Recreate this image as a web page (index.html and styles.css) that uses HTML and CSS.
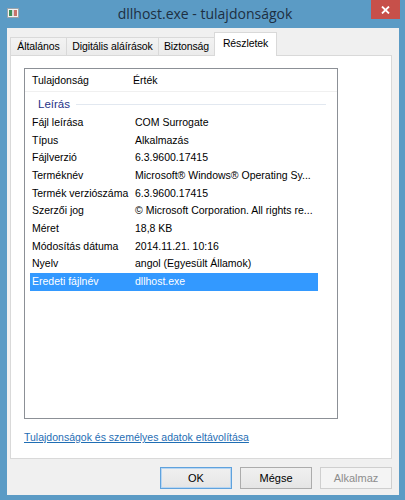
FILE: index.html
```html
<!DOCTYPE html>
<html lang="hu">
<head>
<meta charset="utf-8">
<title>dllhost.exe - tulajdonságok</title>
<link rel="stylesheet" href="styles.css">
</head>
<body>
<div class="window">
  <div class="titlebar">
    <svg class="app-icon" width="12" height="10" viewBox="0 0 12 10">
      <rect x="0.5" y="0.5" width="11" height="9" fill="#f4f4f4" stroke="#9aa3aa"/>
      <rect x="2" y="2" width="3" height="6" fill="#3f8f5a"/>
      <rect x="5" y="2" width="2" height="6" fill="#d9d9d9"/>
      <rect x="7" y="2" width="3" height="6" fill="#c9736c"/>
    </svg>
    <div class="title">dllhost.exe - tulajdonságok</div>
    <div class="close">
      <svg width="9" height="8" viewBox="0 0 9 8"><path d="M1 0.5 L8 7.5 M8 0.5 L1 7.5" stroke="#fff" stroke-width="1.8"/></svg>
    </div>
  </div>
  <div class="client">
    <div class="tabs">
      <div class="tab t1">Általános</div>
      <div class="tab t2">Digitális aláírások</div>
      <div class="tab t3">Biztonság</div>
      <div class="tab t4 active">Részletek</div>
    </div>
    <div class="panel">
      <div class="listbox">
        <div class="header">
          <div class="col-a">Tulajdonság</div>
          <div class="col-b">Érték</div>
        </div>
        <div class="group"><span class="group-label">Leírás</span><span class="group-line"></span></div>
        <div class="row"><div class="col-a">Fájl leírása</div><div class="col-b">COM Surrogate</div></div>
        <div class="row"><div class="col-a">Típus</div><div class="col-b">Alkalmazás</div></div>
        <div class="row"><div class="col-a">Fájlverzió</div><div class="col-b">6.3.9600.17415</div></div>
        <div class="row"><div class="col-a">Terméknév</div><div class="col-b">Microsoft® Windows® Operating Sy...</div></div>
        <div class="row"><div class="col-a">Termék verziószáma</div><div class="col-b">6.3.9600.17415</div></div>
        <div class="row"><div class="col-a">Szerzői jog</div><div class="col-b">© Microsoft Corporation. All rights re...</div></div>
        <div class="row"><div class="col-a">Méret</div><div class="col-b">18,8 KB</div></div>
        <div class="row"><div class="col-a">Módosítás dátuma</div><div class="col-b">2014.11.21. 10:16</div></div>
        <div class="row"><div class="col-a">Nyelv</div><div class="col-b">angol (Egyesült Államok)</div></div>
        <div class="row selected"><div class="col-a">Eredeti fájlnév</div><div class="col-b">dllhost.exe</div></div>
      </div>
      <a class="link" href="#">Tulajdonságok és személyes adatok eltávolítása</a>
    </div>
    <div class="buttons">
      <button class="btn default">OK</button>
      <button class="btn">Mégse</button>
      <button class="btn" disabled>Alkalmaz</button>
    </div>
  </div>
</div>
</body>
</html>
```

FILE: styles.css
```css
html, body {
  margin: 0;
  padding: 0;
}
body {
  width: 405px;
  height: 500px;
  background: #5b9bc5;
  font-family: "Liberation Sans", Arial, sans-serif;
  font-size: 10.5px;
  color: #000;
  overflow: hidden;
}
.window {
  display: flex;
  flex-direction: column;
  height: 500px;
}
.titlebar {
  height: 28px;
  display: flex;
  align-items: flex-start;
}
.app-icon {
  margin: 8px 0 0 7px;
}
.title {
  flex: 1;
  text-align: center;
  font-family: "Open Sans", "Noto Sans", sans-serif;
  font-size: 14px;
  line-height: 28px;
  color: #1d2f42;
  padding-left: 20px;
}
.close {
  width: 29px;
  height: 19px;
  margin-right: 5px;
  background: #c7504a;
  display: flex;
  align-items: center;
  justify-content: center;
}
.client {
  margin: 0 6px 5px 7px;
  height: 467px;
  background: #f0f0f0;
  display: flex;
  flex-direction: column;
}
.tabs {
  display: flex;
  align-items: flex-end;
  padding: 5px 0 0 3px;
  height: 22px;
  position: relative;
  z-index: 1;
}
.tab {
  height: 17px;
  line-height: 17px;
  border: 1px solid #d9d9d9;
  border-bottom: none;
  border-left: none;
  background: linear-gradient(#f3f3f3, #ebebeb);
  text-align: center;
  color: #000;
  white-space: nowrap;
  letter-spacing: -0.1px;
}
.t1 { width: 55px; border-left: 1px solid #d9d9d9; }
.t2 { width: 91px; }
.t3 { width: 55px; }
.t4 { width: 61px; }
.tab.active {
  height: 23px;
  line-height: 20px;
  background: #fff;
  border-left: 1px solid #d9d9d9;
  margin-left: -1px;
  margin-bottom: -1px;
}
.panel {
  margin: 0 7px 0 3px;
  height: 404px;
  background: #fff;
  border: 1px solid #d9d9d9;
  box-sizing: border-box;
  display: flex;
  flex-direction: column;
  padding: 12px 0 0 13px;
}
.listbox {
  width: 314px;
  height: 351px;
  border: 1px solid #8c9096;
  box-sizing: border-box;
  background: #fff;
}
.header {
  display: flex;
  height: 23px;
  line-height: 22px;
  padding-left: 7px;
  border-bottom: 1px solid #f0f0f0;
  box-sizing: border-box;
}
.header .col-a {
  width: 101px;
  flex-shrink: 0;
}
.group {
  display: flex;
  align-items: center;
  height: 20px;
  margin: 2px 0 0 13px;
}
.group-label {
  color: #1e3287;
  font-size: 11.5px;
}
.group-line {
  flex: 1;
  height: 1px;
  background: #e2e8f0;
  margin: 1px 11px 0 6px;
}
.row {
  display: flex;
  height: 17.67px;
  line-height: 17.67px;
  margin-left: 5px;
  width: 288px;
  padding-left: 2px;
  box-sizing: border-box;
  white-space: nowrap;
}
.row .col-a {
  width: 103px;
  flex-shrink: 0;
}
.row.selected {
  background: #3399ff;
  color: #fff;
}
.link {
  margin-top: 12px;
  color: #1f6eb4;
  text-decoration: underline;
  align-self: flex-start;
}
.buttons {
  display: flex;
  justify-content: flex-end;
  gap: 8px;
  padding: 8px 7px 0 0;
}
.btn {
  width: 72px;
  height: 22px;
  font-family: "Liberation Sans", Arial, sans-serif;
  font-size: 11px;
  color: #000;
  background: linear-gradient(#f0f0f0, #e5e5e5);
  border: 1px solid #acacac;
  padding: 0;
  margin: 0;
}
.btn.default {
  border-color: #5fa2dd;
  box-shadow: inset 0 0 0 1px #b8d6f2;
}
.btn:disabled {
  color: #8d8d8d;
  background: #f4f4f4;
  border-color: #cfcfcf;
}
```
